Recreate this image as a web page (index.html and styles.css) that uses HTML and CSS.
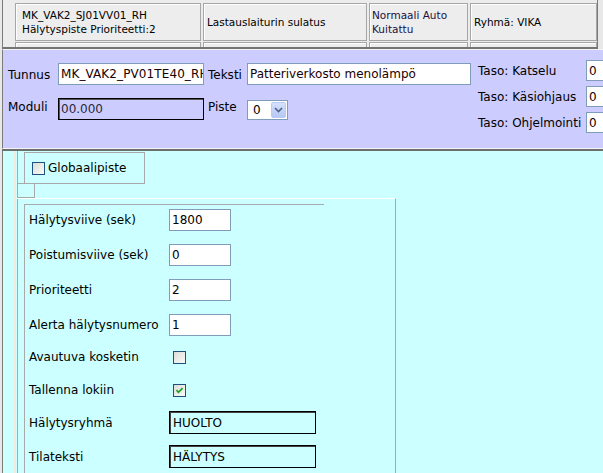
FILE: index.html
```html
<!DOCTYPE html>
<html lang="fi">
<head>
<meta charset="utf-8">
<title>Hälytyspiste</title>
<link rel="stylesheet" href="styles.css">
</head>
<body>
<div class="page">
  <div class="frame frame-top">
    <div class="alarm-table">
      <div class="cell c1">MK_VAK2_SJ01VV01_RH<br>Hälytyspiste Prioriteetti:2</div>
      <div class="cell c2">Lastauslaiturin sulatus</div>
      <div class="cell c3">Normaali Auto<br>Kuitattu</div>
      <div class="cell c4">Ryhmä: VIKA</div>
      <div class="cell c1"></div>
      <div class="cell c2"></div>
      <div class="cell c3"></div>
      <div class="cell c4"></div>
    </div>
  </div>

  <div class="frame frame-lav">
    <div class="ident">
      <div class="lbl lbl-mid">Tunnus</div>
      <div class="field field-id">MK_VAK2_PV01TE40_RH</div>
      <div class="lbl lbl-mid lbl-pad">Teksti</div>
      <div class="field">Patteriverkosto menolämpö</div>
      <div class="lbl lbl-top">Moduli</div>
      <div class="field field-ro">00.000</div>
      <div class="lbl lbl-top lbl-pad">Piste</div>
      <div class="select">
        <span>0</span>
        <span class="select-btn"><svg width="9" height="6" viewBox="0 0 9 6"><path d="M1 1 L4.5 4.5 L8 1" fill="none" stroke="#4D6185" stroke-width="1.6"/></svg></span>
      </div>
    </div>
    <div class="levels">
      <div class="lbl">Taso: Katselu</div>
      <div class="field">0</div>
      <div class="lbl">Taso: Käsiohjaus</div>
      <div class="field">0</div>
      <div class="lbl">Taso: Ohjelmointi</div>
      <div class="field">0</div>
    </div>
  </div>

  <div class="frame frame-cyan">
    <div class="stripe">
      <div class="inner">
        <div class="glob-wrap">
          <div class="glob-box">
            <span class="cb"></span>
            <span class="glob-label">Globaalipiste</span>
          </div>
        </div>
        <div class="tab"></div>
        <div class="form">
          <div class="fieldset">
            <div class="row"><span class="row-label">Hälytysviive (sek)</span><span class="field field-num">1800</span></div>
            <div class="row"><span class="row-label">Poistumisviive (sek)</span><span class="field field-num">0</span></div>
            <div class="row"><span class="row-label">Prioriteetti</span><span class="field field-num">2</span></div>
            <div class="row"><span class="row-label">Alerta hälytysnumero</span><span class="field field-num">1</span></div>
            <div class="row row-check"><span class="row-label">Avautuva kosketin</span><span class="cb cb-row"></span></div>
            <div class="row row-check row-check-2"><span class="row-label">Tallenna lokiin</span><span class="cb cb-row"><svg width="11" height="11" viewBox="0 0 11 11"><path d="M2.5 5.2 L4.5 7.3 L8.6 3.2" fill="none" stroke="#21A121" stroke-width="1.8"/></svg></span></div>
            <div class="row row-wide"><span class="row-label">Hälytysryhmä</span><span class="field field-wide">HUOLTO</span></div>
            <div class="row row-wide row-last"><span class="row-label">Tilateksti</span><span class="field field-wide">HÄLYTYS</span></div>
          </div>
        </div>
      </div>
    </div>
  </div>
</div>
</body>
</html>
```
FILE: styles.css
```css
* {
  box-sizing: border-box;
}

html,
body {
  margin: 0;
  padding: 0;
  height: 100%;
  overflow: hidden;
}

body {
  font-family: "DejaVu Sans", Verdana, sans-serif;
  font-size: 12px;
  line-height: 14px;
  color: #000;
  background: #E8E8E8;
}

.page {
  height: 100%;
  padding-left: 2px;
  display: flex;
  flex-direction: column;
}

.frame {
  border-left: 1px solid #7B7B7B;
  flex-shrink: 0;
}

/* ---------- top frame (alarm list) ---------- */
.frame-top {
  width: 596px;
  height: 49px;
  border-right: 1px solid #7B7B7B;
  border-bottom: 2px solid #747474;
  background: #ECECEC;
  overflow: hidden;
  padding: 3px 0 0 12px;
}

.alarm-table {
  display: grid;
  grid-template-columns: 186px 164px 99px 127px;
  grid-auto-rows: 38px;
  column-gap: 2px;
  row-gap: 1px;
  font-size: 10.5px;
  line-height: 14px;
}

.cell {
  border: 1px solid #A6A6A6;
  box-shadow: inset 1px 1px 0 #FFFFFF;
  background: #EDEDED;
  display: flex;
  align-items: center;
  white-space: nowrap;
  overflow: hidden;
}

.c1 { padding-left: 6px; }
.c2 { padding-left: 3px; }
.c3 { padding-left: 2px; color: #20103F; }
.c4 { padding-left: 3px; }

/* ---------- lavender frame (identity) ---------- */
.frame-lav {
  height: 100px;
  border-top: 1px solid #F4F4F4;
  border-bottom: 1px solid #F4F4F4;
  background: #CCCCFF;
  display: flex;
  overflow: hidden;
}

.ident {
  display: grid;
  grid-template-columns: 50px 146px 43px 224px;
  grid-template-rows: 22px 22px;
  row-gap: 13px;
  margin-left: 5px;
  padding-top: 13px;
  flex-shrink: 0;
}

.lbl {
  white-space: nowrap;
  align-self: center;
}

.lbl-mid {
  padding-top: 2px;
}

.lbl-top {
  align-self: start;
  padding-top: 2px;
}

.lbl-pad {
  padding-left: 4px;
}

.field {
  display: flex;
  align-items: center;
  height: 100%;
  border: 1px solid #7F9DB9;
  background: #FFFFFF;
  padding-left: 2px;
  white-space: nowrap;
  overflow: hidden;
  color: #1A0000;
}

.field-id {
  letter-spacing: 0.1px;
}

.field-ro {
  border: 1px solid #000;
  box-shadow: inset 1px 1px 0 #555;
  background: transparent;
  color: #2A2A3A;
}

.select {
  width: 41px;
  height: 20px;
  align-self: center;
  margin-top: 1px;
  border: 1px solid #7F9DB9;
  background: #FFFFFF;
  display: flex;
  align-items: center;
  justify-content: space-between;
  padding: 0 1px 0 5px;
}

.select-btn {
  width: 15px;
  height: 16px;
  border: 1px solid #BACBF3;
  border-radius: 2px;
  background: linear-gradient(#D6E1FC, #B4C7F4);
  display: flex;
  align-items: center;
  justify-content: center;
}

.levels {
  margin-left: 7px;
  padding-top: 10px;
  display: grid;
  grid-template-columns: 108px 40px;
  grid-auto-rows: 21px;
  row-gap: 5px;
  flex-shrink: 0;
}

/* ---------- cyan frame (settings) ---------- */
.frame-cyan {
  flex: 1;
  min-height: 0;
  border-top: 2px solid #6E6E6E;
  background: #CCFFFF;
  padding-left: 11px;
  display: flex;
  overflow: hidden;
}

.stripe {
  flex: 1;
  display: flex;
  border-left: 2px solid #EFEBDF;
  padding-left: 1px;
}

.inner {
  flex: 1;
  display: flex;
  flex-direction: column;
  border-left: 1px solid #A9A9A9;
}

.glob-wrap {
  width: 127px;
  padding: 1px 0 0 6px;
  border-bottom: 1px solid #A9A9A9;
}

.glob-box {
  height: 31px;
  border: 1px solid #A9A9A9;
  border-bottom: none;
  display: flex;
  align-items: center;
  padding-left: 7px;
}

.glob-label {
  margin-left: 3px;
}

.cb {
  width: 13px;
  height: 13px;
  border: 1px solid #1C5180;
  background: linear-gradient(135deg, #DCDCD7 0%, #FAFAF8 100%);
  display: flex;
  align-items: center;
  justify-content: center;
  flex-shrink: 0;
}

.tab {
  width: 17px;
  height: 14px;
  border-right: 1px solid #A9A9A9;
  border-bottom: 1px solid #A9A9A9;
}

.form {
  flex: 1;
  display: flex;
  flex-direction: column;
  width: 379px;
  margin-left: -1px;
  border-top: 1px solid #FFFFFF;
  border-right: 1px solid #A9A9A9;
  padding: 5px 0 0 7px;
}

.fieldset {
  flex: 1;
  width: 300px;
  border-top: 1px solid #A9A9A9;
  border-left: 1px solid #A9A9A9;
  padding: 4px 0 0 4px;
  display: flex;
  flex-direction: column;
  gap: 13px;
}

.row {
  display: flex;
  align-items: center;
  height: 22px;
  flex-shrink: 0;
}

.row-label {
  width: 140px;
  white-space: nowrap;
}

.field-num {
  width: 62px;
  height: 22px;
  color: #000;
}

.row-check {
  height: 16px;
}

.row-check-2 {
  margin-top: 4px;
}

.cb-row {
  margin-left: 4px;
}

.row-wide {
  height: 23px;
}

.row-last {
  margin-top: -2px;
}

.field-wide {
  width: 147px;
  height: 23px;
  border: 1px solid #000;
  box-shadow: inset 1px 1px 0 #444;
  background: transparent;
  color: #000;
  padding-left: 3px;
}
```
